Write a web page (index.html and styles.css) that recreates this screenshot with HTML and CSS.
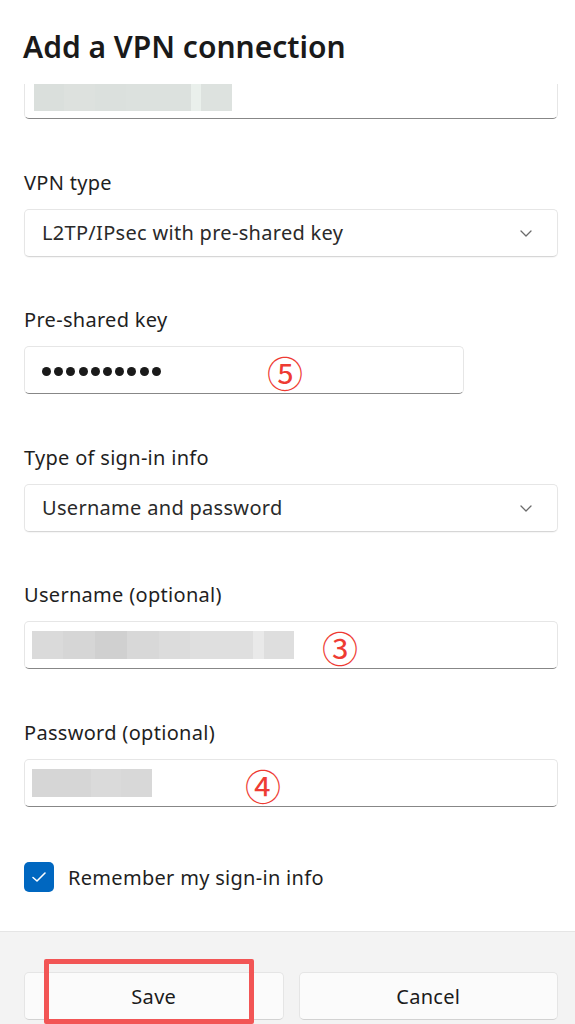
FILE: index.html
```html
<!DOCTYPE html>
<html lang="en">
<head>
<meta charset="utf-8">
<title>Add a VPN connection</title>
<link rel="stylesheet" href="styles.css">
</head>
<body>
<div class="dialog">
  <header class="head">
    <h1 class="title">Add a VPN connection</h1>
  </header>
  <main class="body">
    <div class="clip">
      <div class="input text-input clipped">
        <div class="blur">
          <span class="tile g1" style="width:30px"></span>
          <span class="tile g2" style="width:31px"></span>
          <span class="tile g3" style="width:31px"></span>
          <span class="tile g4" style="width:65px"></span>
          <span class="tile g5" style="width:10px"></span>
          <span class="tile g6" style="width:31px"></span>
        </div>
      </div>
    </div>

    <div class="field">
      <div class="label">VPN type</div>
      <div class="input select">
        <span class="value">L2TP/IPsec with pre-shared key</span>
        <svg class="chev" width="12" height="7" viewBox="0 0 12 7"><path d="M1 1 L6 6 L11 1" fill="none" stroke="#6b6b6b" stroke-width="1.3" stroke-linecap="round" stroke-linejoin="round"/></svg>
      </div>
    </div>

    <div class="field">
      <div class="label">Pre-shared key</div>
      <div class="input text-input short">
        <div class="dots">
          <span class="dot"></span><span class="dot"></span><span class="dot"></span><span class="dot"></span><span class="dot"></span><span class="dot"></span><span class="dot"></span><span class="dot"></span><span class="dot"></span><span class="dot"></span>
        </div>
        <span class="mark mark-5">⑤</span>
      </div>
    </div>

    <div class="field">
      <div class="label">Type of sign-in info</div>
      <div class="input select">
        <span class="value">Username and password</span>
        <svg class="chev" width="12" height="7" viewBox="0 0 12 7"><path d="M1 1 L6 6 L11 1" fill="none" stroke="#6b6b6b" stroke-width="1.3" stroke-linecap="round" stroke-linejoin="round"/></svg>
      </div>
    </div>

    <div class="field">
      <div class="label">Username (optional)</div>
      <div class="input text-input">
        <div class="blur gray">
          <span class="tile u1" style="width:31px"></span>
          <span class="tile u2" style="width:32px"></span>
          <span class="tile u3" style="width:32px"></span>
          <span class="tile u4" style="width:32px"></span>
          <span class="tile u5" style="width:31px"></span>
          <span class="tile u6" style="width:63px"></span>
          <span class="tile u7" style="width:11px"></span>
          <span class="tile u8" style="width:30px"></span>
        </div>
        <span class="mark mark-3">③</span>
      </div>
    </div>

    <div class="field">
      <div class="label">Password (optional)</div>
      <div class="input text-input">
        <div class="blur gray">
          <span class="tile u2" style="width:59px"></span>
          <span class="tile u1" style="width:30px"></span>
          <span class="tile u4" style="width:31px"></span>
        </div>
        <span class="mark mark-4">④</span>
      </div>
    </div>

    <div class="check">
      <span class="box">
        <svg width="16" height="12" viewBox="0 0 16 12"><path d="M2 6.5 L6 10 L14 2" fill="none" stroke="#ffffff" stroke-width="1.6" stroke-linecap="round" stroke-linejoin="round"/></svg>
      </span>
      <span class="check-text">Remember my sign-in info</span>
    </div>
  </main>
  <footer class="foot">
    <button class="btn">Save</button>
    <button class="btn">Cancel</button>
    <div class="highlight"></div>
  </footer>
</div>
</body>
</html>
```

FILE: styles.css
```css
* { box-sizing: border-box; }

html, body {
  margin: 0;
  padding: 0;
  background: #ffffff;
}

body {
  font-family: "Noto Sans", "Open Sans", "DejaVu Sans", sans-serif;
  color: #1b1b1b;
  width: 575px;
  height: 1024px;
  overflow: hidden;
}

.dialog {
  display: flex;
  flex-direction: column;
  height: 1024px;
}

.head {
  height: 84px;
  padding: 29px 17px 0 23px;
}

.title {
  margin: 0;
  font-size: 30px;
  font-weight: 600;
  line-height: 36px;
  color: #1a1a1a;
  letter-spacing: 0;
}

.body {
  padding: 0 17px 39px 24px;
}

.clip {
  height: 35px;
  overflow: hidden;
}

.clipped {
  margin-top: -13px;
}

.field {
  margin-top: 51.5px;
}

.label {
  font-size: 20px;
  letter-spacing: 0.3px;
  line-height: 24px;
  margin-bottom: 14px;
  color: #1f1f1f;
}

.input {
  position: relative;
  height: 48px;
  background: #ffffff;
  border: 1px solid #e6e6e6;
  border-radius: 5px;
  display: flex;
  align-items: center;
}

.text-input {
  border-bottom: 1.5px solid #878787;
}

.short {
  width: 440px;
}

.select {
  justify-content: space-between;
  padding: 0 25px 0 17px;
  border-bottom-color: #d6d6d6;
  box-shadow: 0 1px 1px rgba(0, 0, 0, 0.04);
}

.value {
  font-size: 20px;
  letter-spacing: 0.3px;
  color: #2a2a2a;
}

.chev {
  display: block;
  margin-top: 1px;
}

.blur {
  display: flex;
  height: 28px;
  margin-left: 9px;
  margin-top: 4px;
}

.blur.gray {
  margin-left: 7px;
  margin-top: 0;
}

.tile {
  display: block;
  height: 100%;
}

.g1 { background: #dadfdc; }
.g2 { background: #dde1de; }
.g3 { background: #dbe0dd; }
.g4 { background: #dce1de; }
.g5 { background: #eaf0ec; }
.g6 { background: #dde2df; }

.u1 { background: #dadada; }
.u2 { background: #d6d6d6; }
.u3 { background: #d0d0d0; }
.u4 { background: #d8d8d8; }
.u5 { background: #dcdcdc; }
.u6 { background: #dfdfdf; }
.u7 { background: #e9e9e9; }
.u8 { background: #dedede; }

.dots {
  display: flex;
  gap: 3.2px;
  margin-left: 17px;
  margin-top: 2px;
}

.dot {
  display: block;
  width: 9px;
  height: 9px;
  border-radius: 50%;
  background: #1a1a1a;
}

.mark {
  position: absolute;
  top: 50%;
  transform: translateY(-44%);
  font-family: "Noto Sans CJK SC", "DejaVu Sans", sans-serif;
  font-size: 36px;
  line-height: 1;
  color: #ee3b33;
}

.mark-5 { left: 242px; }
.mark-3 { left: 297px; }
.mark-4 { left: 220px; }

.check {
  margin-top: 55.5px;
  display: flex;
  align-items: center;
  height: 30px;
}

.box {
  width: 30px;
  height: 30px;
  border-radius: 5px;
  background: #0067c0;
  display: flex;
  align-items: center;
  justify-content: center;
  margin-right: 14px;
}

.box svg { display: block; }

.check-text {
  font-size: 20px;
  letter-spacing: 0.3px;
  color: #1f1f1f;
}

.foot {
  position: relative;
  flex: 1;
  background: #f3f3f3;
  border-top: 1px solid #e5e5e5;
  display: flex;
  gap: 15px;
  padding: 40px 17px 0 24px;
}

.btn {
  flex: 1;
  height: 48px;
  background: #fbfbfb;
  border: 1px solid #e5e5e5;
  border-bottom-color: #d2d2d2;
  border-radius: 5px;
  font-family: inherit;
  font-size: 20px;
  letter-spacing: 0.3px;
  color: #1b1b1b;
  padding: 0;
}

.highlight {
  position: absolute;
  left: 44px;
  top: 27px;
  width: 210px;
  height: 65px;
  border: 5px solid #f25555;
  border-radius: 2px;
}
```
